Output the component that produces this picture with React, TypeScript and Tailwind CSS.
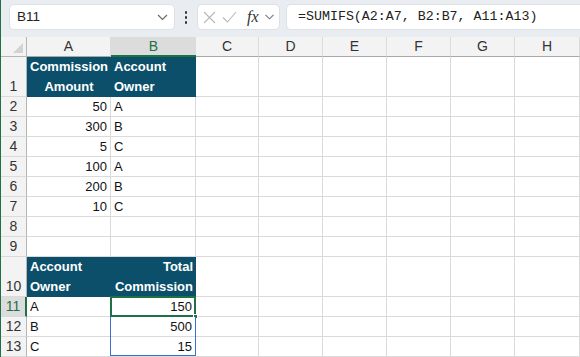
import React from "react"

const cols = ["A", "B", "C", "D", "E", "F", "G", "H"]

type Row = { n: number; tall?: boolean; a?: string; b?: string; head?: boolean; aAlign?: string; bAlign?: string }

const rows: Row[] = [
  { n: 1, tall: true, head: true, a: "Commission\nAmount", b: "Account\nOwner", aAlign: "text-center", bAlign: "text-left" },
  { n: 2, a: "50", b: "A" },
  { n: 3, a: "300", b: "B" },
  { n: 4, a: "5", b: "C" },
  { n: 5, a: "100", b: "A" },
  { n: 6, a: "200", b: "B" },
  { n: 7, a: "10", b: "C" },
  { n: 8 },
  { n: 9 },
  { n: 10, tall: true, head: true, a: "Account\nOwner", b: "Total\nCommission", aAlign: "text-left", bAlign: "text-right" },
  { n: 11, a: "A", b: "150", aAlign: "text-left", bAlign: "text-right" },
  { n: 12, a: "B", b: "500", aAlign: "text-left", bAlign: "text-right" },
  { n: 13, a: "C", b: "15", aAlign: "text-left", bAlign: "text-right" },
]

const Chevron = () => (
  <svg width="11" height="7" viewBox="0 0 11 7" fill="none" stroke="#6b6b6b" strokeWidth="1.2">
    <path d="M1 1l4.5 4.5L10 1" />
  </svg>
)

const Toolbar = () => (
  <div className="flex items-center h-[37px] bg-[#e9edf1] pl-[8px] pt-[4px] pb-[7px]">
    <div className="flex items-center justify-between w-[166px] h-[26px] bg-white rounded-[5px] border border-[#dde1e5] pl-[7px] pr-[6px]">
      <span className="text-[13.5px] text-[#222]">B11</span>
      <Chevron />
    </div>
    <div className="w-[22px] flex flex-col items-center gap-[2px]">
      <span className="w-[2px] h-[3px] bg-[#333] rounded-[1px]" />
      <span className="w-[2px] h-[3px] bg-[#333] rounded-[1px]" />
      <span className="w-[2px] h-[3px] bg-[#333] rounded-[1px]" />
    </div>
    <div className="flex items-center w-[83px] h-[26px] bg-white rounded-[5px] border border-[#dde1e5] pl-[5px] gap-[6px]">
      <svg width="13" height="13" viewBox="0 0 13 13" stroke="#b8b8b8" strokeWidth="1.1">
        <path d="M1 1l11 11M12 1L1 12" />
      </svg>
      <svg width="15" height="12" viewBox="0 0 15 12" fill="none" stroke="#b8b8b8" strokeWidth="1.1">
        <path d="M1 6.5l4.5 4.5L14 1" />
      </svg>
      <span className="ml-[4px] text-[16px] italic text-[#333] leading-none" style={{ fontFamily: '"Liberation Serif", serif' }}>
        fx
      </span>
      <svg width="9" height="6" viewBox="0 0 9 6" fill="none" stroke="#777" strokeWidth="1.1">
        <path d="M0.5 0.8l4 4 4-4" />
      </svg>
    </div>
    <div className="flex items-center flex-1 h-[26px] bg-white rounded-l-[5px] border border-r-0 border-[#dde1e5] ml-[6px] pl-[11px]">
      <span className="text-[13.3px] text-[#222]" style={{ fontFamily: '"Liberation Mono", monospace' }}>
        =SUMIFS(A2:A7, B2:B7, A11:A13)
      </span>
    </div>
  </div>
)

const Sheet = () => (
  <div className="grid grid-cols-[26px_84px_85px_63px_64px_64px_64px_64px_65px] text-[13px] text-[#111]">
    <div className="relative bg-[#f3f3f3] border-r border-b border-[#b5b5b5] h-[20px]">
      <div className="absolute right-[3px] bottom-[3px] w-0 h-0 border-l-[10px] border-l-transparent border-b-[10px] border-b-[#d2d2d2]" />
    </div>
    {cols.map((c) =>
      c === "B" ? (
        <div key={c} className="h-[20px] flex items-center justify-center bg-[#dcdcdc] border-b-2 border-[#1e7145] text-[#1e7145] text-[14px]">
          {c}
        </div>
      ) : (
        <div key={c} className="h-[20px] flex items-center justify-center bg-[#f3f3f3] border-r border-[#dcdcdc] border-b border-b-[#a8a8a8] text-[#333] text-[14px]">
          {c}
        </div>
      )
    )}
    {rows.map((r) => {
      const h = r.tall ? "h-[40px]" : "h-[20px]"
      const sel = r.n === 11
      const cell = r.head
        ? `bg-[#0b4f6b] text-white font-bold leading-[20px] whitespace-pre px-[3px] ${h}`
        : `bg-white border-r border-b border-[#dadada] leading-[19px] px-[3px] ${h}`
      return (
        <React.Fragment key={r.n}>
          <div
            className={`${h} flex items-end justify-center border-b border-[#dadada] text-[14px] leading-[19px] ${
              sel ? "bg-[#dcdcdc] text-[#1e7145] border-r-2 border-r-[#1e7145]" : "bg-[#f3f3f3] text-[#333] border-r border-r-[#b5b5b5]"
            }`}
          >
            {r.n}
          </div>
          <div className={`${cell} ${r.aAlign ?? "text-right"}`}>{r.a}</div>
          <div className={`relative ${cell} ${r.bAlign ?? "text-left"}`}>
            {r.b}
            {r.n === 11 && (
              <>
                <div className="absolute -left-[1px] -top-[1px] -right-[1px] -bottom-[1px] border-2 border-[#1e7145]" />
                <div className="absolute -right-[3px] -bottom-[3px] w-[5px] h-[5px] bg-[#1e7145] border border-white" />
              </>
            )}
            {r.n >= 12 && (
              <div
                className={`absolute -left-[1px] top-0 -right-[1px] border-l border-r border-[#3b6fd0] ${
                  r.n === 13 ? "bottom-0 border-b" : "-bottom-[1px]"
                }`}
              />
            )}
          </div>
          {cols.slice(2).map((c) => (
            <div key={c} className={`${h} bg-white border-r border-b border-[#dadada]`} />
          ))}
        </React.Fragment>
      )
    })}
  </div>
)

export default function App() {
  return (
    <div className="w-[580px] h-[357px] overflow-hidden bg-white border-l border-[#1e7145]" style={{ fontFamily: '"Liberation Sans", Arial, sans-serif' }}>
      <Toolbar />
      <Sheet />
    </div>
  )
}
